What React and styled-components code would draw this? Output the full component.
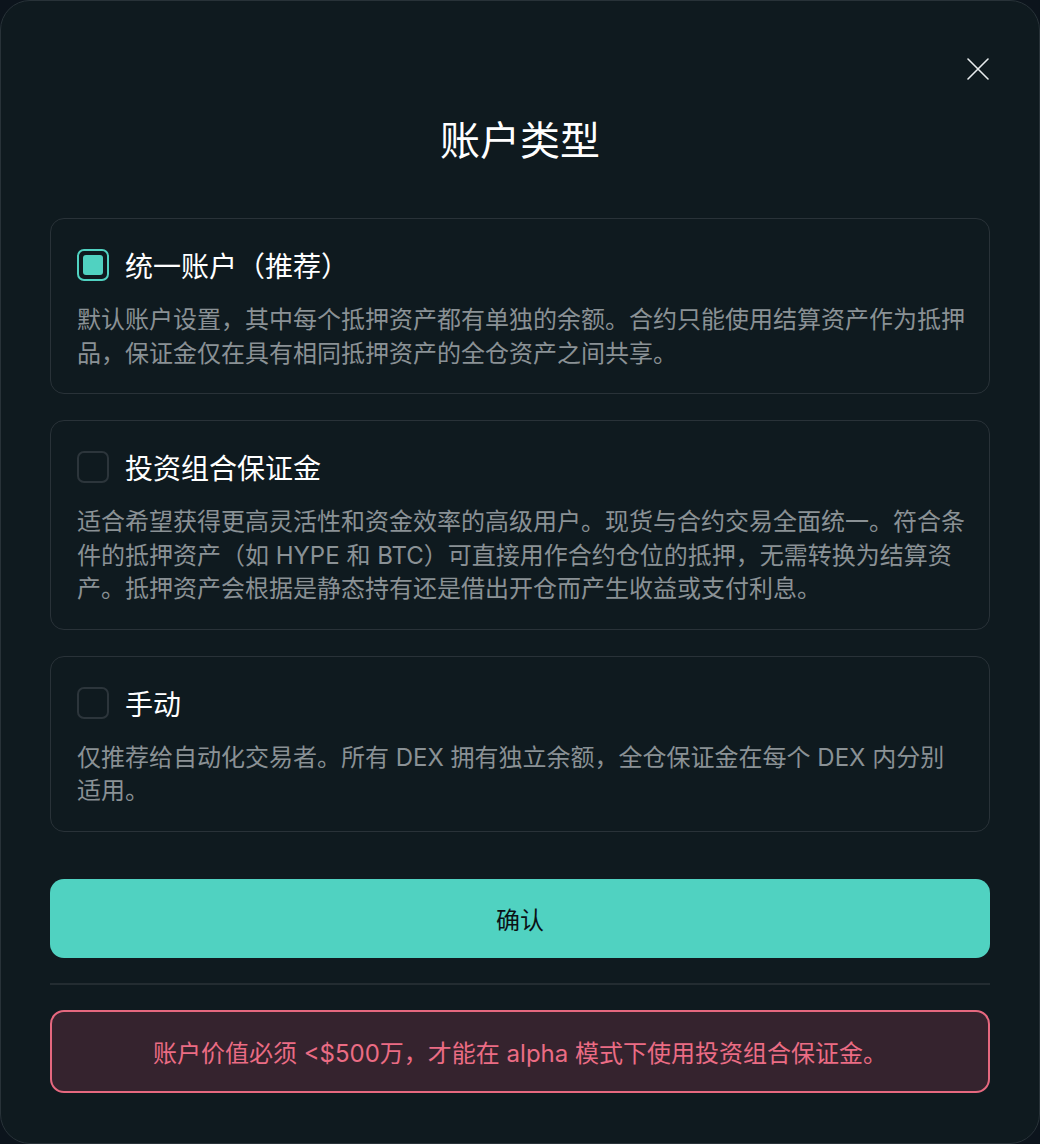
import React, { useState } from 'react'
import styled, { createGlobalStyle } from 'styled-components'

const GlobalStyle = createGlobalStyle`
  body {
    margin: 0;
    background: #0c141c;
    font-family: "Inter", "Noto Sans CJK SC", sans-serif;
  }
`

const options = [
  {
    id: 'unified',
    title: '统一账户（推荐）',
    desc: '默认账户设置，其中每个抵押资产都有单独的余额。合约只能使用结算资产作为抵押品，保证金仅在具有相同抵押资产的全仓资产之间共享。',
  },
  {
    id: 'portfolio',
    title: '投资组合保证金',
    desc: '适合希望获得更高灵活性和资金效率的高级用户。现货与合约交易全面统一。符合条件的抵押资产（如 HYPE 和 BTC）可直接用作合约仓位的抵押，无需转换为结算资产。抵押资产会根据是静态持有还是借出开仓而产生收益或支付利息。',
  },
  {
    id: 'manual',
    title: '手动',
    desc: '仅推荐给自动化交易者。所有 DEX 拥有独立余额，全仓保证金在每个 DEX 内分别适用。',
  },
]

function App() {
  const [selected, setSelected] = useState('unified')

  return (
    <>
      <GlobalStyle />
      <Modal>
        <CloseButton aria-label="关闭">
          <svg width="22" height="22" viewBox="0 0 22 22">
            <path d="M1 1L21 21M21 1L1 21" stroke="#e8ecee" strokeWidth="1.6" strokeLinecap="round" />
          </svg>
        </CloseButton>
        <Title>账户类型</Title>
        <List>
          {options.map((o) => (
            <Card key={o.id} onClick={() => setSelected(o.id)}>
              <Header>
                <Check checked={selected === o.id} />
                <CardTitle>{o.title}</CardTitle>
              </Header>
              <Desc>{o.desc}</Desc>
            </Card>
          ))}
        </List>
        <Confirm>确认</Confirm>
        <Divider />
        <Warning>账户价值必须 &lt;$500万，才能在 alpha 模式下使用投资组合保证金。</Warning>
      </Modal>
    </>
  )
}

const Modal = styled.div`
  position: relative;
  box-sizing: border-box;
  width: 1040px;
  min-height: 1142px;
  background: #0f1a1f;
  border: 1px solid #283238;
  border-radius: 30px;
  padding: 115px 49px 50px;
  display: flex;
  flex-direction: column;
`

const CloseButton = styled.button`
  position: absolute;
  top: 57px;
  right: 50px;
  width: 22px;
  height: 22px;
  padding: 0;
  border: none;
  background: none;
  cursor: pointer;
  display: flex;
`

const Title = styled.h1`
  margin: 0 0 52px;
  text-align: center;
  color: #ffffff;
  font-size: 40px;
  font-weight: 400;
  line-height: 50px;
`

const List = styled.div`
  display: flex;
  flex-direction: column;
  gap: 26px;
`

const Card = styled.div`
  border: 1px solid #293238;
  border-radius: 14px;
  padding: 30px 23px 23px 26px;
  cursor: pointer;
`

const Header = styled.div`
  display: flex;
  align-items: center;
  gap: 16px;
  height: 32px;
`

const Check = styled.span`
  box-sizing: border-box;
  width: 32px;
  height: 32px;
  border-radius: 7px;
  border: 2px solid ${(p) => (p.checked ? '#50d2c1' : '#2c353b')};
  padding: 4px;
  display: flex;
  &::after {
    content: '';
    flex: 1;
    border-radius: 3px;
    background: ${(p) => (p.checked ? '#50d2c1' : 'transparent')};
  }
`

const CardTitle = styled.span`
  color: #ffffff;
  font-size: 28px;
  font-weight: 400;
`

const Desc = styled.p`
  margin: 22px 0 0;
  color: #8a9195;
  font-size: 24px;
  line-height: 33.5px;
`

const Confirm = styled.button`
  margin-top: 47px;
  height: 79px;
  border: none;
  border-radius: 14px;
  background: #50d2c1;
  color: #0b1216;
  font-family: inherit;
  font-size: 24px;
  cursor: pointer;
`

const Divider = styled.div`
  margin: 25px 0;
  height: 2px;
  background: #232c31;
`

const Warning = styled.div`
  height: 83px;
  box-sizing: border-box;
  border: 2px solid #e6687f;
  border-radius: 14px;
  background: #35232e;
  color: #eb6c84;
  font-size: 24px;
  display: flex;
  align-items: center;
  justify-content: center;
`

export default App
